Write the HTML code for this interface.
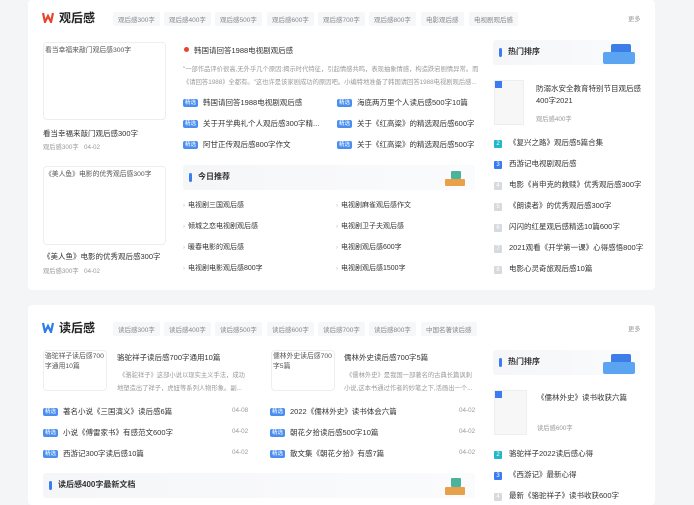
<!DOCTYPE html>
<html><head><meta charset="utf-8"><style>
*{margin:0;padding:0;box-sizing:border-box}
body{width:694px;height:500px;overflow:hidden;background:#f4f5f7;font-family:"Liberation Sans","Noto Sans CJK SC",sans-serif;color:#333;position:relative}
.a{position:absolute;white-space:nowrap}
.card{position:absolute;left:28px;width:627px;background:#fff;border-radius:4px}
.t{font-size:12px;font-weight:bold;color:#222}
.tab{font-size:6.5px;color:#888;background:#f6f7f9;padding:2px 5px;border-radius:2px}
.s{font-size:7.5px;color:#333}
.g{font-size:6.5px;color:#aaa}
.d{font-size:6.3px;color:#999}
.bd{display:inline-block;font-size:5.5px;color:#fff;background:#4a8ef0;padding:0 2px;border-radius:2px;margin-right:5px;line-height:8px;vertical-align:1px}
.img{position:absolute;border:1px solid #eee;border-radius:4px;background:#fff}
.bar{position:absolute;height:25px;background:linear-gradient(90deg,#f5f6f8,#fafbfc);border-radius:3px}
.bl{position:absolute;left:6px;top:8px;width:3px;height:9px;background:#3b7cf0;border-radius:2px}
.num{display:inline-block;width:8px;height:8px;font-size:6px;color:#fff;text-align:center;line-height:8px;border-radius:1px;margin-right:7px;background:#d6d9de;vertical-align:0}
.ar{color:#bbb;margin-right:3px;font-size:6px}
</style></head><body>

<div class="card" style="top:0;height:290px"></div>
<div class="card" style="top:305px;height:200px"></div>

<!-- Card 1 header -->
<svg class="a" style="left:42px;top:12px" width="12" height="11" viewBox="0 0 12 11"><path d="M1 1 L3 10 L6 4 L9 10 L11 1" stroke="#e8452c" stroke-width="2.2" fill="none"/></svg>
<div class="a t" style="left:59px;top:9px">观后感</div>
<div class="a tab" style="left:113px;top:12px">观后感300字</div>
<div class="a tab" style="left:164px;top:12px">观后感400字</div>
<div class="a tab" style="left:215px;top:12px">观后感500字</div>
<div class="a tab" style="left:267px;top:12px">观后感600字</div>
<div class="a tab" style="left:318px;top:12px">观后感700字</div>
<div class="a tab" style="left:369px;top:12px">观后感800字</div>
<div class="a tab" style="left:421px;top:12px">电影观后感</div>
<div class="a tab" style="left:469px;top:12px">电视剧观后感</div>
<div class="a d" style="left:628px;top:14px">更多</div>

<div class="img" style="left:43px;top:42px;width:123px;height:78px"><div class="a g" style="left:1px;top:1px;color:#555;font-size:6.8px">看当幸福来敲门观后感300字</div></div>
<div class="a s" style="left:43px;top:128px">看当幸福来敲门观后感300字</div>
<div class="a d" style="left:43px;top:142px">观后感300字 &nbsp; 04-02</div>
<div class="img" style="left:43px;top:166px;width:123px;height:79px"><div class="a" style="left:1px;top:1px;color:#555;font-size:6.8px;white-space:normal;width:118px">《美人鱼》电影的优秀观后感300字</div></div>
<div class="a s" style="left:43px;top:251px">《美人鱼》电影的优秀观后感300字</div>
<div class="a d" style="left:43px;top:266px">观后感300字 &nbsp; 04-02</div>

<div class="a" style="left:184px;top:47px;width:5px;height:5px;border-radius:50%;background:#e8452c"></div>
<div class="a s" style="left:194px;top:45px">韩国请回答1988电视剧观后感</div>
<div class="a d" style="left:183px;top:64px">"一部作品评价很高,无外乎几个原因:揭示时代特征，引起情感共鸣，表现抽象情感，构造跌宕剧情异常。而</div>
<div class="a d" style="left:183px;top:77px">《请回答1988》全都有。"这也许是该家剧成功的原因吧。小编特地准备了韩国请回答1988电视剧观后感...</div>
<div class="a s" style="left:183px;top:97px"><span class="bd">精选</span>韩国请回答1988电视剧观后感</div>
<div class="a s" style="left:183px;top:118px"><span class="bd">精选</span>关于开学典礼个人观后感300字精...</div>
<div class="a s" style="left:183px;top:139px"><span class="bd">精选</span>阿甘正传观后感800字作文</div>
<div class="a s" style="left:337px;top:97px"><span class="bd">精选</span>海底两万里个人读后感500字10篇</div>
<div class="a s" style="left:337px;top:118px"><span class="bd">精选</span>关于《红高粱》的精选观后感600字</div>
<div class="a s" style="left:337px;top:139px"><span class="bd">精选</span>关于《红高粱》的精选观后感500字</div>

<div class="bar" style="left:183px;top:165px;width:292px"><div class="bl"></div><div class="a" style="left:15px;top:6px;font-size:8px;font-weight:bold">今日推荐</div>
<div class="a" style="left:262px;top:14px;width:20px;height:7px;background:#e8a04a;border-radius:1px"></div><div class="a" style="left:268px;top:6px;width:10px;height:8px;background:#4bb39a;border-radius:1px"></div></div>
<div class="a s" style="left:183px;top:200px;font-size:7px"><span class="ar">›</span>电视剧三国观后感</div>
<div class="a s" style="left:183px;top:221px;font-size:7px"><span class="ar">›</span>倾城之恋电视剧观后感</div>
<div class="a s" style="left:183px;top:242px;font-size:7px"><span class="ar">›</span>暖春电影的观后感</div>
<div class="a s" style="left:183px;top:263px;font-size:7px"><span class="ar">›</span>电视剧电影观后感800字</div>
<div class="a s" style="left:336px;top:200px;font-size:7px"><span class="ar">›</span>电视剧麻雀观后感作文</div>
<div class="a s" style="left:336px;top:221px;font-size:7px"><span class="ar">›</span>电视剧卫子夫观后感</div>
<div class="a s" style="left:336px;top:242px;font-size:7px"><span class="ar">›</span>电视剧观后感600字</div>
<div class="a s" style="left:336px;top:263px;font-size:7px"><span class="ar">›</span>电视剧观后感1500字</div>

<div class="bar" style="left:493px;top:40px;width:147px"><div class="bl"></div><div class="a" style="left:15px;top:6px;font-size:8px;font-weight:bold">热门排序</div>
<div class="a" style="left:118px;top:4px;width:20px;height:20px;background:#3c7de8;border-radius:2px"></div><div class="a" style="left:110px;top:12px;width:32px;height:12px;background:#5aa4f2;border-radius:2px"></div></div>
<div class="a" style="left:494px;top:80px;width:30px;height:45px;background:#f7f7f7;border:1px solid #eee"><div class="a" style="left:0;top:0;width:7px;height:7px;background:#3b7cf0"></div></div>
<div class="a s" style="left:536px;top:83px">防溺水安全教育特别节目观后感</div>
<div class="a s" style="left:536px;top:95px">400字2021</div>
<div class="a d" style="left:536px;top:114px">观后感400字</div>
<div class="a s" style="left:494px;top:137px"><span class="num" style="background:#22b8c8">2</span>《复兴之路》观后感5篇合集</div>
<div class="a s" style="left:494px;top:158px"><span class="num" style="background:#3b7cf0">3</span>西游记电视剧观后感</div>
<div class="a s" style="left:494px;top:179px"><span class="num">4</span>电影《肖申克的救赎》优秀观后感300字</div>
<div class="a s" style="left:494px;top:200px"><span class="num">5</span>《朗读者》的优秀观后感300字</div>
<div class="a s" style="left:494px;top:221px"><span class="num">6</span>闪闪的红星观后感精选10篇600字</div>
<div class="a s" style="left:494px;top:242px"><span class="num">7</span>2021观看《开学第一课》心得感悟800字</div>
<div class="a s" style="left:494px;top:263px"><span class="num">8</span>电影心灵奇旅观后感10篇</div>

<!-- Card 2 -->
<svg class="a" style="left:42px;top:322px" width="12" height="11" viewBox="0 0 12 11"><path d="M1 1 L3 10 L6 4 L9 10 L11 1" stroke="#2f7be8" stroke-width="2.2" fill="none"/></svg>
<div class="a t" style="left:59px;top:319px">读后感</div>
<div class="a tab" style="left:113px;top:322px">读后感300字</div>
<div class="a tab" style="left:164px;top:322px">读后感400字</div>
<div class="a tab" style="left:215px;top:322px">读后感500字</div>
<div class="a tab" style="left:267px;top:322px">读后感600字</div>
<div class="a tab" style="left:318px;top:322px">读后感700字</div>
<div class="a tab" style="left:369px;top:322px">读后感800字</div>
<div class="a tab" style="left:421px;top:322px">中国名著读后感</div>
<div class="a d" style="left:628px;top:324px">更多</div>

<div class="img" style="left:43px;top:350px;width:64px;height:41px"><div class="a" style="left:1px;top:1px;color:#555;font-size:6.8px;white-space:normal;width:62px;line-height:10px">骆驼祥子读后感700字通用10篇</div></div>
<div class="a s" style="left:117px;top:352px">骆驼祥子读后感700字通用10篇</div>
<div class="a d" style="left:119px;top:370px">《骆驼祥子》这部小说以现实主义手法，成功</div>
<div class="a d" style="left:117px;top:383px">地塑造出了祥子，虎妞等系列人物形象。副...</div>
<div class="img" style="left:271px;top:350px;width:64px;height:41px"><div class="a" style="left:1px;top:1px;color:#555;font-size:6.8px;white-space:normal;width:62px;line-height:10px">儒林外史读后感700字5篇</div></div>
<div class="a s" style="left:344px;top:352px">儒林外史读后感700字5篇</div>
<div class="a d" style="left:346px;top:370px">《儒林外史》是我国一部著名的古典长篇讽刺</div>
<div class="a d" style="left:344px;top:383px">小说,这本书通过作者的妙笔之下,活画出一个...</div>
<div class="a s" style="left:43px;top:406px"><span class="bd">精选</span>著名小说《三国演义》读后感6篇</div>
<div class="a s" style="left:43px;top:427px"><span class="bd">精选</span>小说《傅雷家书》有感范文600字</div>
<div class="a s" style="left:43px;top:448px"><span class="bd">精选</span>西游记300字读后感10篇</div>
<div class="a d" style="left:232px;top:407px">04-08</div>
<div class="a d" style="left:232px;top:428px">04-02</div>
<div class="a d" style="left:232px;top:449px">04-02</div>
<div class="a s" style="left:270px;top:406px"><span class="bd">精选</span>2022《儒林外史》读书体会六篇</div>
<div class="a s" style="left:270px;top:427px"><span class="bd">精选</span>朝花夕拾读后感500字10篇</div>
<div class="a s" style="left:270px;top:448px"><span class="bd">精选</span>散文集《朝花夕拾》有感7篇</div>
<div class="a d" style="left:459px;top:407px">04-02</div>
<div class="a d" style="left:459px;top:428px">04-02</div>
<div class="a d" style="left:459px;top:449px">04-02</div>

<div class="bar" style="left:43px;top:473px;width:432px"><div class="bl"></div><div class="a" style="left:15px;top:6px;font-size:8px;font-weight:bold">读后感400字最新文档</div>
<div class="a" style="left:402px;top:14px;width:20px;height:8px;background:#e8a04a;border-radius:1px"></div><div class="a" style="left:408px;top:5px;width:10px;height:9px;background:#4bb39a;border-radius:1px"></div></div>

<div class="bar" style="left:493px;top:350px;width:147px"><div class="bl"></div><div class="a" style="left:15px;top:6px;font-size:8px;font-weight:bold">热门排序</div>
<div class="a" style="left:118px;top:4px;width:20px;height:20px;background:#3c7de8;border-radius:2px"></div><div class="a" style="left:110px;top:12px;width:32px;height:12px;background:#5aa4f2;border-radius:2px"></div></div>
<div class="a" style="left:494px;top:390px;width:33px;height:45px;background:#f7f7f7;border:1px solid #eee"><div class="a" style="left:0;top:0;width:7px;height:7px;background:#3b7cf0"></div></div>
<div class="a s" style="left:537px;top:392px">《儒林外史》读书收获六篇</div>
<div class="a d" style="left:537px;top:423px">读后感600字</div>
<div class="a s" style="left:494px;top:448px"><span class="num" style="background:#22b8c8">2</span>骆驼祥子2022读后感心得</div>
<div class="a s" style="left:494px;top:469px"><span class="num" style="background:#3b7cf0">3</span>《西游记》最新心得</div>
<div class="a s" style="left:494px;top:490px"><span class="num">4</span>最新《骆驼祥子》读书收获600字</div>
</body></html>
